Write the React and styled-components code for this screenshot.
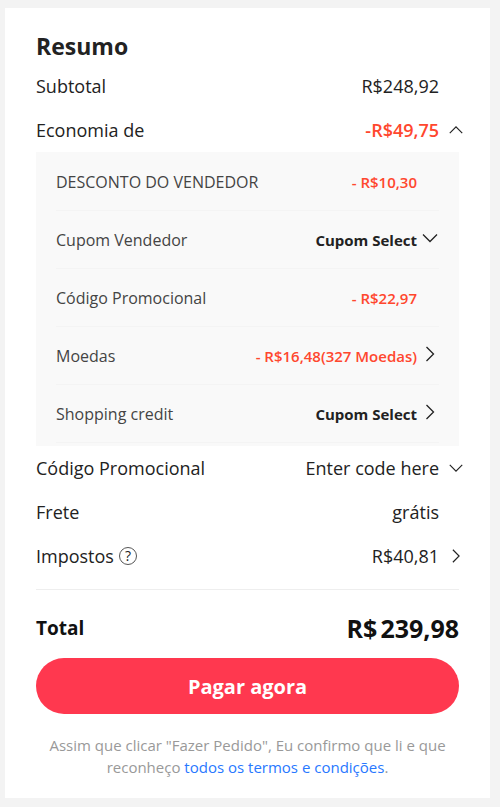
import styled, { createGlobalStyle } from 'styled-components';

const discounts = [
    { label: 'DESCONTO DO VENDEDOR', value: '- R$10,30' },
    { label: 'Cupom Vendedor', action: 'Cupom Select', arrow: 'down' },
    { label: 'Código Promocional', value: '- R$22,97' },
    { label: 'Moedas', value: '- R$16,48(327 Moedas)', arrow: 'right' },
    { label: 'Shopping credit', action: 'Cupom Select', arrow: 'right' },
];

const arrows = {
    up: 'M2 12.5L9 5.5L16 12.5',
    down: 'M2 5.5L9 12.5L16 5.5',
    right: 'M5.5 2L12.5 9L5.5 16',
};

function Arrow({ direction, size }) {
    return (
        <ArrowIcon viewBox="0 0 18 18" $size={size} aria-hidden="true">
            <path d={arrows[direction]} />
        </ArrowIcon>
    );
}

export default function App() {
    return (
        <>
            <GlobalStyle />
            <Card>
                <Title>Resumo</Title>
                <Row>
                    <span>Subtotal</span>
                    <Value>R$248,92</Value>
                </Row>
                <Row>
                    <span>Economia de</span>
                    <ValueButton type="button" $discount aria-expanded="true">
                        -R$49,75
                        <Arrow direction="up" size={16} />
                    </ValueButton>
                </Row>
                <Details>
                    {discounts.map(({ label, value, action, arrow }) => (
                        <DetailRow key={label}>
                            <span>{label}</span>
                            {arrow ? (
                                <DetailButton type="button" $discount={!action}>
                                    {value || action}
                                    <Arrow direction={arrow} size={18} />
                                </DetailButton>
                            ) : (
                                <DetailValue>{value}</DetailValue>
                            )}
                        </DetailRow>
                    ))}
                </Details>
                <Row>
                    <span>Código Promocional</span>
                    <ValueButton type="button">
                        Enter code here
                        <Arrow direction="down" size={16} />
                    </ValueButton>
                </Row>
                <Row>
                    <span>Frete</span>
                    <Value>grátis</Value>
                </Row>
                <Row>
                    <TaxLabel>
                        Impostos
                        <HelpButton type="button" aria-label="Impostos">?</HelpButton>
                    </TaxLabel>
                    <ValueButton type="button">
                        R$40,81
                        <Arrow direction="right" size={16} />
                    </ValueButton>
                </Row>
                <TotalRow>
                    <TotalLabel>Total</TotalLabel>
                    <TotalValue>
                        <span>R$</span>
                        <span>239,98</span>
                    </TotalValue>
                </TotalRow>
                <PayButton type="button">Pagar agora</PayButton>
                <Terms>
                    Assim que clicar "Fazer Pedido", Eu confirmo que li e que
                    reconheço <a href="#termos">todos os termos e condições</a>.
                </Terms>
            </Card>
        </>
    );
}

const GlobalStyle = createGlobalStyle`
* {
    box-sizing: border-box;
}
body {
    margin: 0;
    background: #f3f3f3;
    color: #222222;
    font-family: 'Open Sans', 'Noto Sans', sans-serif;
}
button {
    padding: 0;
    border: none;
    background: none;
    color: inherit;
    font: inherit;
    cursor: pointer;
}
`;
const Card = styled.main`
margin: 8px 10px 8px 5px;
padding: 22px 31px 20px;
background: #ffffff;
`;
const Title = styled.h1`
margin: 0 0 2px;
font-size: 23px;
line-height: 32px;
font-weight: 700;
`;
const Row = styled.div`
display: flex;
justify-content: space-between;
align-items: center;
height: 44px;
font-size: 18px;
line-height: 24px;
`;
const Value = styled.span`
margin-right: 20px;
`;
const ValueButton = styled.button`
display: flex;
align-items: center;
gap: 9px;
margin-right: -5px;
color: ${props => props.$discount ? '#ff472e' : 'inherit'};
font-weight: ${props => props.$discount ? 600 : 400};
`;
const ArrowIcon = styled.svg`
width: ${props => props.$size}px;
height: ${props => props.$size}px;
fill: none;
stroke: #222222;
stroke-width: 1.3;
`;
const Details = styled.div`
padding: 1px 20px 3px;
background: #f9f9f9;
`;
const DetailRow = styled.div`
display: flex;
justify-content: space-between;
align-items: center;
height: 58px;
border-bottom: 1px solid #f4f4f4;
color: #444444;
font-size: 16px;
line-height: 22px;
`;
const DetailValue = styled.span`
margin-right: 22px;
color: #ff472e;
font-size: 15px;
font-weight: 600;
`;
const DetailButton = styled.button`
display: flex;
gap: 4px;
color: ${props => props.$discount ? '#ff472e' : '#222222'};
font-size: 15px;
font-weight: ${props => props.$discount ? 600 : 700};
`;
const TaxLabel = styled.span`
display: flex;
align-items: center;
gap: 5px;
`;
const HelpButton = styled.button`
&& {
    width: 18px;
    height: 18px;
    border: 1px solid #555555;
    border-radius: 50%;
    font-size: 14px;
    line-height: 16px;
}
`;
const TotalRow = styled.div`
display: flex;
justify-content: space-between;
align-items: center;
margin-top: 11px;
padding: 21px 0 13px;
border-top: 1px solid #eeeeee;
color: #111111;
font-weight: 700;
`;
const TotalLabel = styled.span`
font-size: 19px;
line-height: 26px;
`;
const TotalValue = styled.span`
display: flex;
gap: 3px;
font-size: 25px;
line-height: 34px;
`;
const PayButton = styled.button`
&& {
    display: block;
    width: 100%;
    height: 56px;
    border-radius: 28px;
    background: #ff384f;
    color: #ffffff;
    font-size: 20px;
    font-weight: 700;
}
`;
const Terms = styled.p`
margin: 20px 0 0;
color: #999999;
font-size: 15px;
line-height: 22px;
text-align: center;

    a {
        color: #2878ff;
        text-decoration: none;
    }
`;
